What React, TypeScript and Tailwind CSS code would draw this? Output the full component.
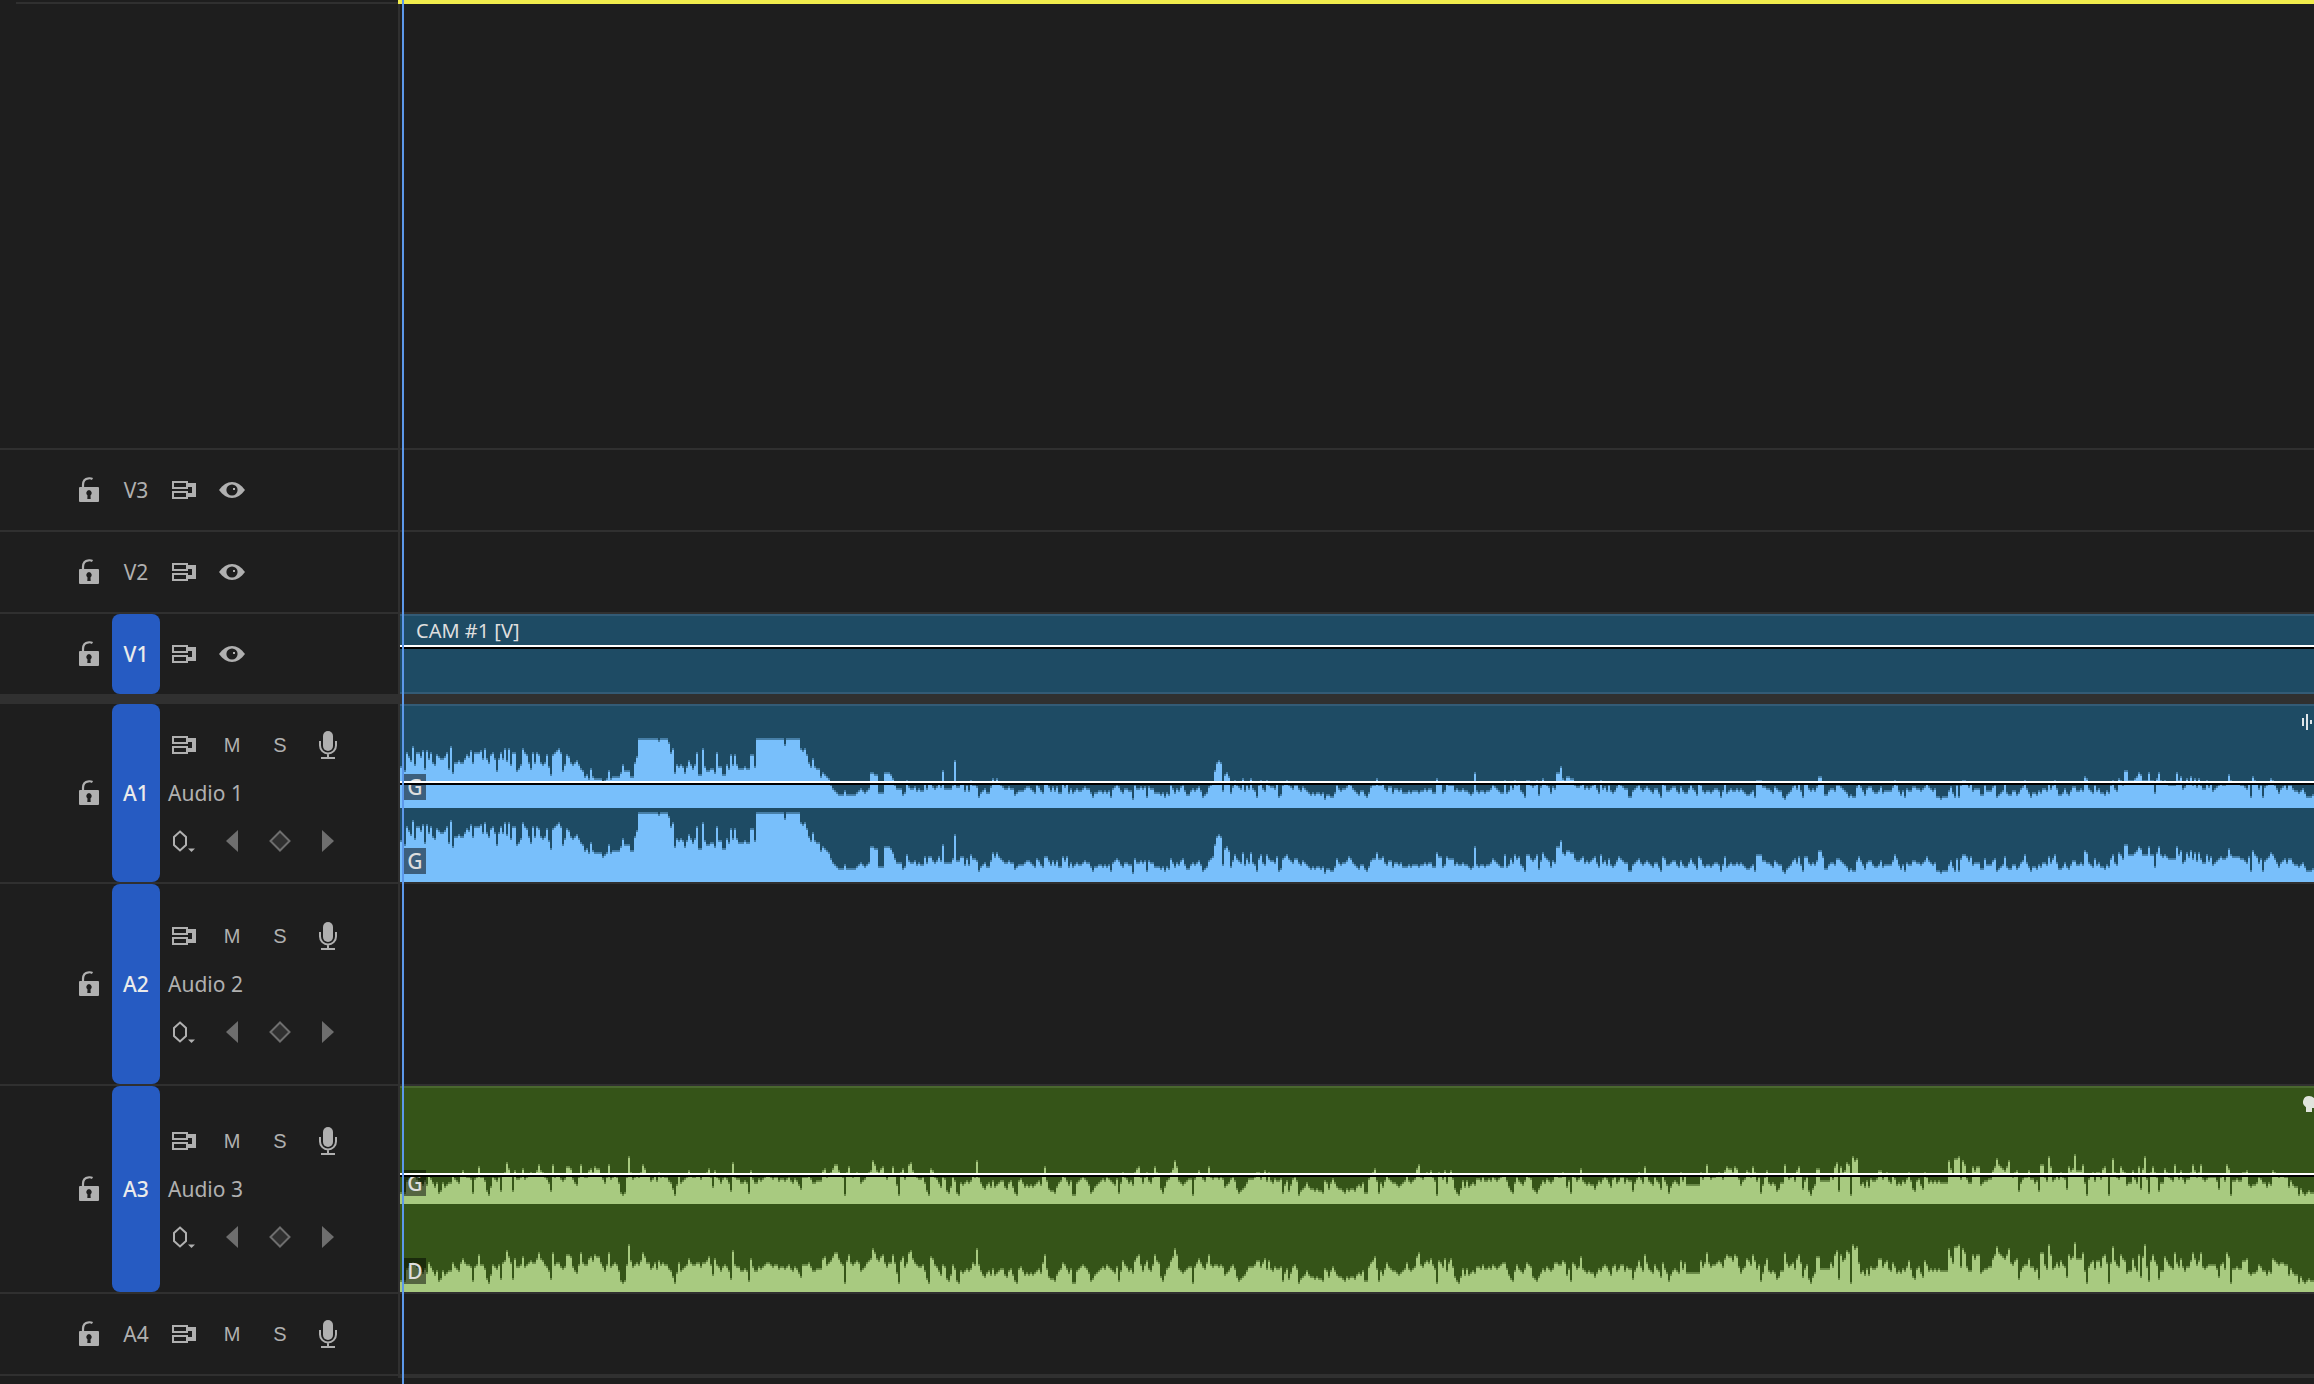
import React from 'react';

type Chunk = { start: number; peaks: string };

// Peak levels, one base-36 digit per 2px column, each step is 2px tall.
const camPeaks: Chunk[] = [
  {
    start: 0,
    peaks:
      'kkirpnulrrpsjsormlqpooprjuhmmnmmoqpsmrrrsotomqroiorotntlrrij' +
      'ltrqmjrmrqmlmqkgqrstrilqpmlmnljifgejfeeeecdeieffffhliiiffmpy' +
      'yyyyyyyyyxyyyywrthlklkhknljlrggtkiijjhrkkggljqlqljjjkjjqqkyy' +
      'yyyyyyyyyyyyvyyyyyyytstqmkokjjfhgfeb98766686666678' +
      '98789hhgg7',
  },
  {
    start: 240,
    peaks:
      '77hhhgeb99967da99a8988c9cca9acai9999bnaacc8b8dbba578977aecec' +
      'ba99a99678889aa987ba87cca8a8a77cac79789889a99757788' +
      '787859aba8799884b99a9a5a9977767576b9798ab8668989a857',
  },
  {
    start: 402,
    peaks:
      '67abcimnm8ghf7adba9e8b9e985bd98dbaa9c56bcdba9bb98a' +
      '9876767767466557b9899acb987688657abbebbc98aa799897',
  },
  {
    start: 504,
    peaks: '87888788989977ecc78cbbb8988988767h87887889ba9877d78b9dbc875d',
  },
  {
    start: 564,
    peaks: 'dbabd6aecba7a9hhkedffeebaabc9a9abc97d9a8b878acba995589ab989a9879975c',
  },
  {
    start: 630,
    peaks:
      '5cb889aa87a8779b986cb87887899858c78988989876678' +
      '5dddaa9987a98854678ab9c85cc9898affc668998bba9875655ac' +
      'a869aa8778a78888adb8685988aa9989aca989555',
  },
  {
    start: 770,
    peaks: '45558a75b5bddcac899966b888ab5678c76688679ad97577687998c9bd96',
  },
  {
    start: 830,
    peaks:
      '679768aa8898fe987b8977687bd98edbiidddefhgdddhdd7ehdcdcbbbbhd' +
      'f9aecfbeaeb99dac89abcbbcgdccccbba9c5fdc9b5abcedb979ab9bb98878975556655',
  },
];

const ambientPeaks: Chunk[] = [
  {
    start: 0,
    peaks:
      '666cdefedcbacafdb9b67b9abbfdcbfhfeed6dejeec759edce7fglif7hd' +
      'deidefgffhkhgedb7keffdcdjjidbaekfeehigjiifdbekdefe',
  },
  {
    start: 109,
    peaks:
      'b656eogdefegkiffcdfcgefeecb85afbcdehfeeffdffgie9hedbdedb7led' +
      'dbbcb6hdbbdcdeffedeecddcdecbdca8eeefdbbc',
  },
  {
    start: 211,
    peaks:
      'hiefgikkhfe5gjfefgfbcdfghmkhgijfdffjfa5gidfklhfeddeb75ihedb9' +
      'ed769ec65babcbcfemeb98ab9c9abc',
  },
  {
    start: 302,
    peaks:
      '98bc965cdb9a9a9abcafjc87769bcfecac55bcdedca679abcdcedcbad6bg' +
      'edbcagijebegcbejgf869cdgimjcbabcd',
  },
  {
    start: 395,
    peaks:
      'd5dfhfdcfjedeeded9abdec86789bdddeggdfhcgcbdccd6ac7adec5789b9' +
      '8878776cb8bdb98876878879a9b66dfgic6b9cfdcbba9abcfcbcdikedfgn',
  },
  {
    start: 514,
    peaks:
      'fhec5gfdhbfhd8658c9c9abaddceccdcedcdeffc976becbacfed8768acbd' +
      'cbcffeegf9c6fecdicbabaa8acbdedb9debceebdcc7bdgdbjf' +
      'cbaecb8fca69bcbagcfa',
  },
  {
    start: 650,
    peaks: 'gdfkfdeefgfdhjiigjidacdhgejgce6aehbaba78bbkfdefchjf8ce758aiic',
  },
  {
    start: 715,
    peaks: 'fdjl7jghlk5omnfab9c9dccdhhdfgcbfdabacbdgc87cda8gebcbcbcb',
  },
  {
    start: 774,
    peaks: 'mifnnodmkdbbjhjjabccddhjnkjihjmfegh7bdeehddbc7kkecojcdfd8i',
  },
  {
    start: 830,
    peaks:
      'ged8jhiphhhkb5dfgcggdijf5fngedjhgabbhdbj8iod6gjge7bbiged' +
      'ckfdhdbddgkhegkdcdeeeec8efcki5ccdccggha9aabedbb9bahgfeffee9c' +
      'a995865676666666',
  },
];

const STEP = 2;

function wavePath(chunks: Chunk[], height: number, lift: number) {
  const levels: number[] = [];
  chunks.forEach(({ start, peaks }) => {
    while (levels.length < start) levels.push(levels[levels.length - 1]);
    peaks.split('').forEach((c, i) => {
      levels[start + i] = parseInt(c, 36);
    });
  });
  const top = levels
    .map((level, i) => `V${height - level * STEP - lift}H${(i + 1) * STEP}`)
    .join('');
  return `M0 ${height}${top}V${height}Z`;
}

const LockIcon = () => (
  <svg width="20" height="26" viewBox="0 0 20 26" fill="none">
    <path d="M4 11V8C4 4 6 1.6 9.5 1.3C11 1.1 12.3 1.3 13.5 2" stroke="currentColor" strokeWidth="2.2" />
    <path
      fillRule="evenodd"
      fill="currentColor"
      d="M1 10H19Q20 10 20 11V24Q20 25 19 25H1Q0 25 0 24V11Q0 10 1 10ZM10 13A3 3 0 0 0 8.5 18.4L8.3 22H11.7L11.5 18.4A3 3 0 0 0 10 13Z"
    />
  </svg>
);

const SyncIcon = () => (
  <svg width="24" height="18" viewBox="0 0 24 18" fill="none" shapeRendering="crispEdges">
    <path d="M15 2H24V16H15V12H20V6H15Z" fill="currentColor" />
    <rect x="1" y="1" width="14" height="6" stroke="currentColor" strokeWidth="2" />
    <rect x="1" y="11" width="14" height="6" stroke="currentColor" strokeWidth="2" />
  </svg>
);

const EyeIcon = () => (
  <svg width="26" height="16" viewBox="0 0 26 16">
    <path d="M0 8C4 2.8 8 0 13 0S22 2.8 26 8C22 13.2 18 16 13 16S4 13.2 0 8Z" fill="currentColor" />
    <circle cx="13" cy="8" r="5.6" fill="#1e1e1e" />
    <rect x="14" y="6" width="2" height="2" fill="currentColor" />
  </svg>
);

const MicIcon = () => (
  <svg width="18" height="28" viewBox="0 0 18 28" fill="none">
    <rect x="4" y="0" width="10" height="20" rx="5" fill="currentColor" />
    <path d="M1 10V14.5A8 8 0 0 0 17 14.5V10M9 22.5V27M2 27H16" stroke="currentColor" strokeWidth="2" />
  </svg>
);

const KeyframeIcon = () => (
  <svg width="22" height="22" viewBox="0 0 22 22" fill="none">
    <path d="M7 1.5L13 7V15L7 20.5L1 15V7Z" stroke="currentColor" strokeWidth="2" />
    <path d="M15 18.5H22L18.5 22Z" fill="currentColor" />
  </svg>
);

const ArrowIcon: React.FC<{ back?: boolean }> = ({ back }) => (
  <svg width="12" height="22" viewBox="0 0 12 22">
    <path d={back ? 'M12 0V22L0 11Z' : 'M0 0V22L12 11Z'} fill="currentColor" />
  </svg>
);

const DiamondIcon = () => (
  <svg width="22" height="22" viewBox="0 0 22 22">
    <path d="M11 1.5L20.5 11L11 20.5L1.5 11Z" fill="#303030" stroke="currentColor" strokeWidth="2" />
  </svg>
);

const ToolButton: React.FC<{ label: string; dim?: boolean; children: React.ReactNode }> = ({
  label,
  dim,
  children,
}) => (
  <button
    type="button"
    aria-label={label}
    className={`flex h-12 w-12 items-center justify-center font-['Liberation_Sans',sans-serif] text-xl ${
      dim ? 'text-[#6e6e6e]' : 'text-[#b0b0b0]'
    }`}
  >
    {children}
  </button>
);

type TrackProps = {
  id: string;
  kind: 'video' | 'audio';
  name?: string;
  targeted?: boolean;
  size: string;
  children?: React.ReactNode;
};

const Track: React.FC<TrackProps> = ({ id, kind, name, targeted, size, children }) => (
  <section className={`flex ${size}`}>
    <header className="flex w-[400px] shrink-0 items-center border-r-2 border-[#303030] pl-[79px]">
      <button type="button" aria-label={`Lock ${id}`} className="mr-[13px] text-[#b0b0b0]">
        <LockIcon />
      </button>
      <button
        type="button"
        className={`w-12 self-stretch rounded-lg pt-0.5 text-[21px] ${
          targeted ? 'bg-[#265bc2] font-medium text-[#ebebeb]' : 'text-[#b0b0b0]'
        }`}
      >
        {id}
      </button>
      <div>
        <div className="flex">
          <ToolButton label="Toggle sync lock">
            <SyncIcon />
          </ToolButton>
          {kind === 'video' ? (
            <ToolButton label="Toggle track output">
              <EyeIcon />
            </ToolButton>
          ) : (
            <>
              <ToolButton label="Mute track">M</ToolButton>
              <ToolButton label="Solo track">S</ToolButton>
              <ToolButton label="Voice-over record">
                <MicIcon />
              </ToolButton>
            </>
          )}
        </div>
        {name && (
          <>
            <div className="flex h-12 items-center pl-2 pt-0.5 text-[21px]">{name}</div>
            <div className="flex">
              <ToolButton label="Show keyframes">
                <KeyframeIcon />
              </ToolButton>
              <ToolButton label="Previous keyframe" dim>
                <ArrowIcon back />
              </ToolButton>
              <ToolButton label="Add keyframe" dim>
                <DiamondIcon />
              </ToolButton>
              <ToolButton label="Next keyframe" dim>
                <ArrowIcon />
              </ToolButton>
            </div>
          </>
        )}
      </div>
    </header>
    <div className="min-w-0 flex-1">{children}</div>
  </section>
);

const Divider = () => <div className="h-0.5 bg-[#303030]" />;

const LevelLine: React.FC<{ className: string }> = ({ className }) => (
  <div className={`absolute inset-x-0 h-1 border-t-2 border-white bg-black ${className}`} />
);

const Channel: React.FC<{
  label: string;
  chunks: Chunk[];
  height: number;
  size: string;
  color: string;
  lift?: number;
  line?: string;
}> = ({ label, chunks, height, size, color, lift = 0, line }) => (
  <div className={`relative overflow-hidden ${size} ${color}`}>
    <svg className="block h-full w-full" shapeRendering="crispEdges" fill="currentColor">
      <path d={wavePath(chunks, height, lift)} opacity="0.45" />
      <path d={wavePath(chunks, height, lift - STEP)} />
    </svg>
    <span className="absolute bottom-2 left-1 flex h-[26px] w-[22px] items-center justify-center bg-black/50 pt-0.5 text-[21px] font-medium text-[#dedede]">
      {label}
    </span>
    {line && <LevelLine className={line} />}
  </div>
);

export default function App() {
  return (
    <main className="relative flex min-h-screen flex-col overflow-hidden bg-[#1e1e1e] font-['Noto_Sans',sans-serif] text-[#b0b0b0]">
      <div className="flex h-[448px]">
        <div className="w-[398px] shrink-0 pl-4 pt-0.5">
          <Divider />
        </div>
        <div className="flex-1 border-t-4 border-[#f1ec4c]">
          <div className="h-full w-0.5 bg-[#303030]" />
        </div>
      </div>

      <Divider />
      <Track id="V3" kind="video" size="h-20" />
      <Divider />
      <Track id="V2" kind="video" size="h-20" />
      <Divider />
      <Track id="V1" kind="video" size="h-20" targeted>
        <div className="relative h-full border-y-2 border-[#335b76] bg-[#1e4b64] pl-4 text-xl leading-[30px] text-[#dedede]">
          CAM #1 [V]
          <LevelLine className="top-[29px]" />
        </div>
      </Track>

      <div className="h-2.5 bg-[#303030]" />

      <Track id="A1" kind="audio" name="Audio 1" size="h-[178px]" targeted>
        <div className="h-full bg-[#1e4b64]">
          <div className="flex h-[30px] items-end justify-end border-t-2 border-[#335b76]">
            <svg width="12" height="20" viewBox="0 0 12 20" fill="#dfe5e9" shapeRendering="crispEdges">
              <path d="M0 4H2V12H0ZM4 0H6V16H4ZM8 6H10V10H8Z" />
            </svg>
          </div>
          <Channel label="G" chunks={camPeaks} height={74} size="h-[74px]" color="text-[#78bffb]" lift={2} line="top-[47px]" />
          <Channel label="G" chunks={camPeaks} height={74} size="h-[74px]" color="text-[#78bffb]" lift={2} />
        </div>
      </Track>
      <Divider />
      <Track id="A2" kind="audio" name="Audio 2" size="h-[200px]" targeted />
      <Divider />
      <Track id="A3" kind="audio" name="Audio 3" size="h-[206px]" targeted>
        <div className="h-full bg-[#355418]">
          <div className="flex h-[30px] items-end justify-end border-t-2 border-[#4a682f]">
            <svg width="11" height="20" viewBox="0 0 11 20" fill="#e0e4dc">
              <path d="M6 0A6 6 0 0 0 3 11.2V16H9V12H11V2Q9 0 6 0Z" />
            </svg>
          </div>
          <Channel label="G" chunks={ambientPeaks} height={88} size="h-[88px]" color="text-[#a8ca80]" line="top-[57px]" />
          <Channel label="D" chunks={ambientPeaks} height={88} size="h-[88px]" color="text-[#a8ca80]" />
        </div>
      </Track>
      <Divider />
      <Track id="A4" kind="audio" size="h-20" />
      <div className="flex flex-1 items-start border-t-2 border-[#303030]">
        <div className="ml-[398px] h-0.5 flex-1 bg-[#303030]" />
      </div>

      <div className="absolute inset-y-0 left-[402px] w-0.5 bg-[#5c98ea]" />
    </main>
  );
}
